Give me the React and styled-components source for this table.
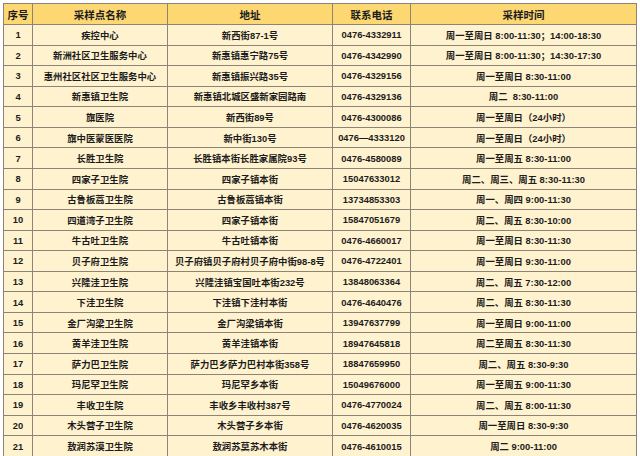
import React from "react";
import styled, { createGlobalStyle } from "styled-components";

const rows = [
  ["1", "疾控中心", "新西街87-1号", "0476-4332911", "周一至周日 8:00-11:30；14:00-18:30"],
  ["2", "新洲社区卫生服务中心", "新惠镇惠宁路75号", "0476-4342990", "周一至周日 8:00-11:30；14:30-17:30"],
  ["3", "惠州社区社区卫生服务中心", "新惠镇振兴路35号", "0476-4329156", "周一至周日 8:30-11:00"],
  ["4", "新惠镇卫生院", "新惠镇北城区盛新家园路南", "0476-4329136", "周二  8:30-11:00"],
  ["5", "旗医院", "新西街89号", "0476-4300086", "周一至周日（24小时）"],
  ["6", "旗中医蒙医医院", "新中街130号", "0476—4333120", "周一至周日（24小时）"],
  ["7", "长胜卫生院", "长胜镇本街长胜家属院93号", "0476-4580089", "周一至周五 8:30-11:00"],
  ["8", "四家子卫生院", "四家子镇本街", "15047633012", "周二、周三、周五 8:30-11:30"],
  ["9", "古鲁板蒿卫生院", "古鲁板蒿镇本街", "13734853303", "周一、周四 9:00-11:30"],
  ["10", "四道湾子卫生院", "四家子镇本街", "15847051679", "周二、周五 8:30-10:00"],
  ["11", "牛古吐卫生院", "牛古吐镇本街", "0476-4660017", "周一至周日 8:30-11:30"],
  ["12", "贝子府卫生院", "贝子府镇贝子府村贝子府中街98-8号", "0476-4722401", "周一至周日 9:30-11:00"],
  ["13", "兴隆洼卫生院", "兴隆洼镇宝国吐本街232号", "13848063364", "周二、周五 7:30-12:00"],
  ["14", "下洼卫生院", "下洼镇下洼村本街", "0476-4640476", "周二、周五 8:30-11:30"],
  ["15", "金厂沟梁卫生院", "金厂沟梁镇本街", "13947637799", "周一至周日 9:00-11:00"],
  ["16", "黄羊洼卫生院", "黄羊洼镇本街", "18947645818", "周二至周五 8:30-11:30"],
  ["17", "萨力巴卫生院", "萨力巴乡萨力巴村本街358号", "18847659950", "周二、周五 8:30-9:30"],
  ["18", "玛尼罕卫生院", "玛尼罕乡本街", "15049676000", "周一至周五 9:00-11:30"],
  ["19", "丰收卫生院", "丰收乡丰收村387号", "0476-4770024", "周二、周五 8:00-11:30"],
  ["20", "木头营子卫生院", "木头营子乡本街", "0476-4620035", "周一至周日 8:30-9:30"],
  ["21", "敖润苏漠卫生院", "敖润苏莫苏木本街", "0476-4610015", "周二 9:00-11:00"],
];

const headers = ["序号", "采样点名称", "地址", "联系电话", "采样时间"];
const widths = [29, 135, 165, 78, 226];

export default function App() {
  return (
    <>
      <GlobalStyle />
      <Table>
        <colgroup>
          {widths.map((w, i) => (
            <col key={i} style={{ width: w }} />
          ))}
        </colgroup>
        <thead>
          <tr>
            {headers.map((h) => (
              <HeadCell key={h}>{h}</HeadCell>
            ))}
          </tr>
        </thead>
        <tbody>
          {rows.map((r) => (
            <Row key={r[0]}>
              {r.map((c, i) => (
                <Cell key={i}>{c}</Cell>
              ))}
            </Row>
          ))}
        </tbody>
      </Table>
    </>
  );
}

const GlobalStyle = createGlobalStyle`
  html, body {
    margin: 0;
    padding: 0;
    background: #fff;
  }
  body {
    font-family: "Liberation Sans", "Noto Sans CJK SC", sans-serif;
  }
`;

const Table = styled.table`
  margin: 3px 0 0 3px;
  width: 633px;
  table-layout: fixed;
  border-collapse: collapse;
  border: 1px solid #8c8577;
  color: #1c1c1c;
  font-weight: 700;
`;

const HeadCell = styled.th`
  height: 20px;
  padding: 0;
  background: #fdd872;
  border: 1px solid #8c8577;
  font-size: 10.5px;
  font-weight: 700;
  text-align: center;
  white-space: nowrap;
  overflow: hidden;
`;

const Row = styled.tr`
  height: 20.57px;
  background: #fff2cf;
`;

const Cell = styled.td`
  padding: 0;
  border: 1px solid #8c8577;
  font-size: 9.4px;
  text-align: center;
  white-space: pre;
  overflow: hidden;
`;
